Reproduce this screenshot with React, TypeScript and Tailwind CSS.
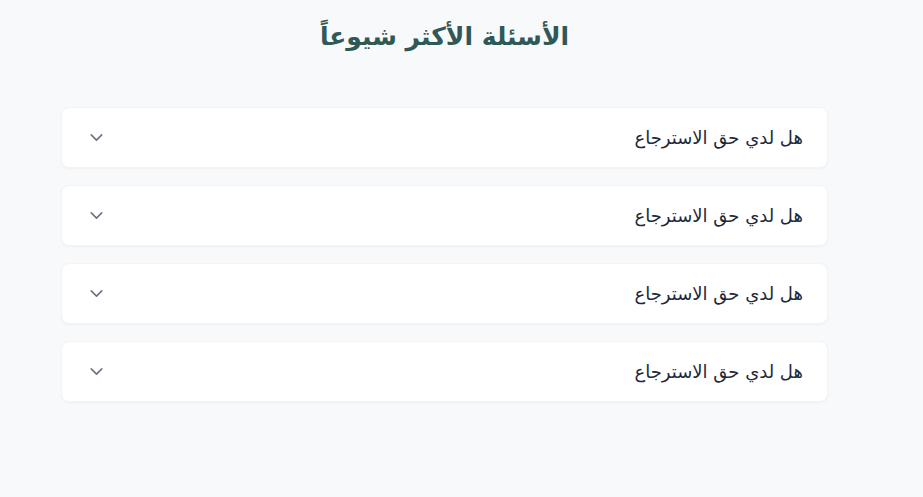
import { ChevronDown } from 'lucide-react'

const faqs = [
  { q: 'هل لدي حق الاسترجاع' },
  { q: 'هل لدي حق الاسترجاع' },
  { q: 'هل لدي حق الاسترجاع' },
  { q: 'هل لدي حق الاسترجاع' },
]

export default function App() {
  return (
    <div
      dir="rtl"
      className="min-h-[497px] bg-[#f8f9fb] pt-[14px]"
      style={{ fontFamily: '"DejaVu Sans", "Noto Sans", sans-serif' }}
    >
      <div className="mr-[95px] w-[767px]">
        <h2 className="text-center text-[25px] font-bold leading-[46px] text-[#2f5856]">
          الأسئلة الأكثر شيوعاً
        </h2>
        <div className="mt-[47px] flex flex-col gap-[17px]">
          {faqs.map((item, i) => (
            <button
              key={i}
              className="flex h-[61px] w-full items-center justify-between rounded-lg border border-gray-100 bg-white pl-[24px] pr-[24px] shadow-[0_1px_2px_rgba(0,0,0,0.04)]"
            >
              <span className="text-[18px] text-gray-800">{item.q}</span>
              <ChevronDown className="h-[21px] w-[21px] text-gray-500" strokeWidth={1.8} />
            </button>
          ))}
        </div>
      </div>
    </div>
  )
}
